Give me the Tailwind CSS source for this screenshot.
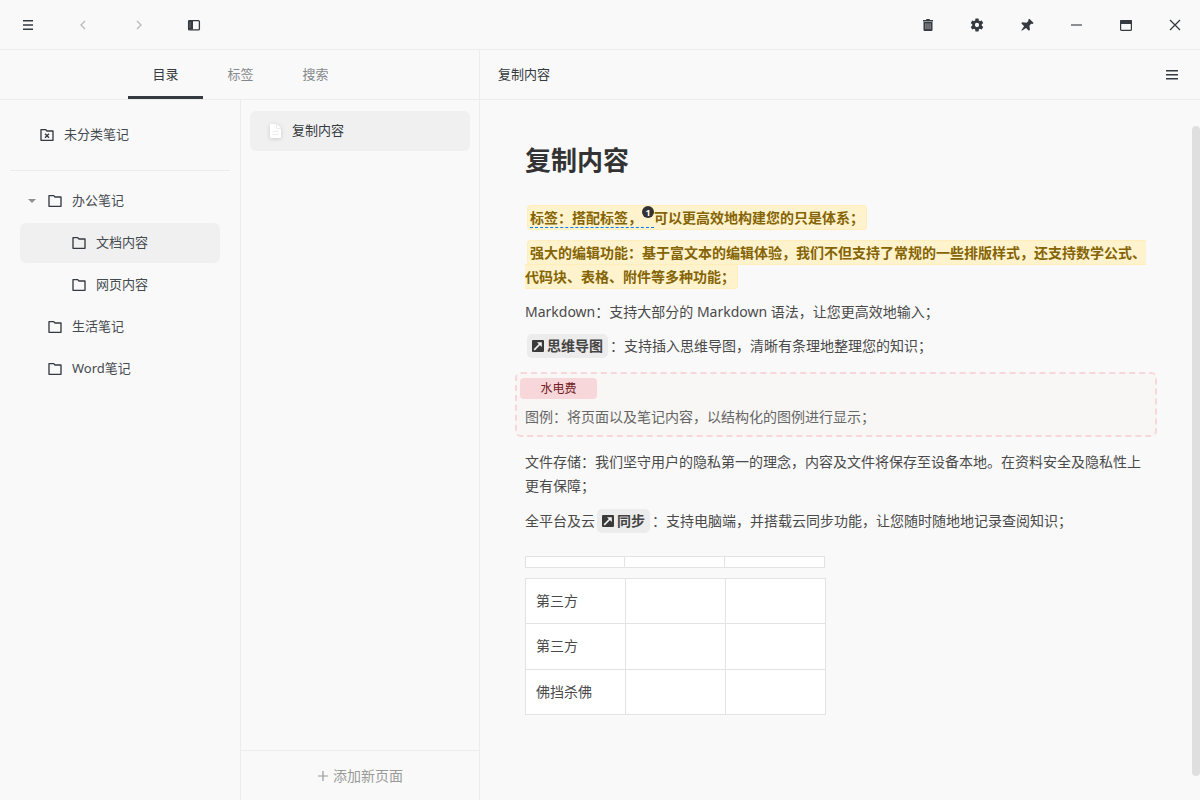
<!DOCTYPE html>
<html lang="zh-CN">
<head>
<meta charset="utf-8">
<title>复制内容</title>
<script src="https://cdn.jsdelivr.net/npm/@tailwindcss/browser@4"></script>
</head>
<body class="flex h-screen flex-col overflow-hidden bg-[#f9f9f9] font-['Noto_Sans','Noto_Sans_CJK_SC',sans-serif] text-[13px] text-[#343a40]">
<svg class="hidden" aria-hidden="true">
  <symbol id="folder" viewBox="0 0 24 24"><path d="M4 5v14h16V7h-8.414l-2-2H4zm8.414 0H21a1 1 0 0 1 1 1v14a1 1 0 0 1-1 1H3a1 1 0 0 1-1-1V4a1 1 0 0 1 1-1h7.414l2 2z"/></symbol>
  <symbol id="jump" viewBox="0 0 12 12"><path fill="#3a3a3a" d="M1 0h10a1 1 0 0 1 1 1v10a1 1 0 0 1-1 1H1a1 1 0 0 1-1-1V1a1 1 0 0 1 1-1z"/><path fill="none" stroke="#f4f4f4" stroke-width="1.7" d="M2.2 9.8 8 4"/><path fill="#f4f4f4" d="M5 2.200h4.800V7z"/></symbol>
</svg>
<header class="flex h-[50px] shrink-0 items-center justify-between border-b border-[#ececec] pr-[17px] pl-5">
  <div class="flex gap-[39px]">
    <button aria-label="菜单"><svg class="size-4" viewBox="0 0 16 16" fill="currentColor"><path d="M3 3h10v1.4H3zM3 7.3h10v1.4H3zM3 11.6h10V13H3z"/></svg></button>
    <button aria-label="后退" class="text-[#b9bbbd]"><svg class="size-4" viewBox="0 0 16 16" fill="none" stroke="currentColor" stroke-width="1.4"><path d="M10 4 6 8l4 4"/></svg></button>
    <button aria-label="前进" class="text-[#b9bbbd]"><svg class="size-4" viewBox="0 0 16 16" fill="none" stroke="currentColor" stroke-width="1.4"><path d="m7 4 4 4-4 4"/></svg></button>
    <button aria-label="侧栏"><svg class="size-4" viewBox="0 0 16 16"><rect x="3.6" y="3.6" width="10.8" height="9.3" rx="1" fill="none" stroke="currentColor" stroke-width="1.3"/><path fill="currentColor" d="M3 3.5h5v9H3z"/><path stroke="#aaa" stroke-width=".8" d="M4.5 5.9h1.2M4.5 7.9h1.2M4.5 9.9h1.2"/></svg></button>
  </div>
  <div class="flex w-[263px] justify-between">
    <button aria-label="删除"><svg class="size-4" viewBox="0 0 16 16" fill="currentColor"><path d="M3 3h3l.6-1h2.8l.6 1h3v1.4H3zM3.5 5h9v8a1 1 0 0 1-1 1h-7a1 1 0 0 1-1-1z"/><path stroke="#c4c6c8" stroke-width=".8" d="M5.9 6.2v6M8 6.2v6M10.1 6.2v6"/></svg></button>
    <button aria-label="设置"><svg class="size-4" viewBox="0 0 24 24" fill="currentColor"><path d="M19.14 12.94c.04-.3.06-.61.06-.94 0-.32-.02-.64-.07-.94l2.03-1.58a.49.49 0 0 0 .12-.61l-1.92-3.32a.488.488 0 0 0-.59-.22l-2.39.96c-.5-.38-1.03-.7-1.62-.94l-.36-2.54a.484.484 0 0 0-.48-.41h-3.84c-.24 0-.43.17-.47.41l-.36 2.54c-.59.24-1.13.57-1.62.94l-2.39-.96c-.22-.08-.47 0-.59.22L2.74 8.87c-.12.21-.08.47.12.61l2.03 1.58c-.05.3-.09.63-.09.94s.02.64.07.94l-2.03 1.58a.49.49 0 0 0-.12.61l1.92 3.32c.12.22.37.29.59.22l2.39-.96c.5.38 1.03.7 1.62.94l.36 2.54c.05.24.24.41.48.41h3.84c.24 0 .44-.17.47-.41l.36-2.54c.59-.24 1.13-.56 1.62-.94l2.39.96c.22.08.47 0 .59-.22l1.92-3.32c.12-.22.07-.47-.12-.61l-2.01-1.58zM12 15.2a3.2 3.2 0 1 1 0-6.4 3.2 3.2 0 0 1 0 6.4z"/></svg></button>
    <button aria-label="置顶"><svg class="size-4" viewBox="0 0 24 24" fill="currentColor"><path d="M22 9 15.500 2.500l-1.700 1.700.4 1.800-3 2.600L5 7.800 3.400 9.400l4.300 4.300L3.500 20l.700.700 6.300-4.200 4.300 4.300 1.600-1.600-.800-6.200 2.600-3 1.900.5z"/></svg></button>
    <button aria-label="最小化"><svg class="size-4" viewBox="0 0 16 16"><path fill="#8b8f92" d="M3 7h11v2H3z"/></svg></button>
    <button aria-label="最大化"><svg class="size-4" viewBox="0 0 16 16"><rect x="2.6" y="3.6" width="10.8" height="9.8" rx="1" fill="none" stroke="currentColor" stroke-width="1.2"/><path fill="currentColor" d="M2 4a1 1 0 0 1 1-1h10a1 1 0 0 1 1 1v3H2z"/></svg></button>
    <button aria-label="关闭"><svg class="size-4" viewBox="0 0 16 16" fill="none" stroke="currentColor" stroke-width="1.3"><path d="m3 3 10 10M13 3 3 13"/></svg></button>
  </div>
</header>
<div class="flex min-h-0 grow">
  <aside class="flex w-[480px] shrink-0 flex-col border-r border-[#ececec]">
    <nav class="flex h-[50px] shrink-0 border-b border-[#ececec] pl-32 text-[#85888b]">
      <button class="w-[75px] border-b-3 border-[#343a40] pt-[3px] text-[#343a40]">目录</button>
      <button class="w-[75px]">标签</button>
      <button class="w-[75px]">搜索</button>
    </nav>
    <div class="flex min-h-0 grow">
      <div class="w-60 shrink-0">
        <div class="mx-[10px] flex h-[71px] items-center gap-[9px] border-b border-[#ececec] pl-[29px]">
          <svg class="size-4" fill="currentColor" viewBox="0 0 24 24"><use href="#folder"/><path stroke="currentColor" stroke-width="2" d="m9 10 6 6M15 10l-6 6"/></svg><span class="text-[#454a4f]">未分类笔记</span>
        </div>
        <ul class="mx-5 mt-[10px] flex flex-col gap-[2px] text-[#454a4f] [&_svg]:text-[#343a40]">
          <li class="flex h-10 items-center gap-[9px] pl-2"><svg class="mr-[2px] h-2 w-2" viewBox="0 0 8 8"><path fill="#8e9194" d="M0 2h8L4 6z"/></svg><svg class="size-4" fill="currentColor"><use href="#folder"/></svg>办公笔记</li>
          <li class="flex h-10 items-center gap-[9px] rounded-md bg-[#f0f0f0] pl-[51px]"><svg class="size-4" fill="currentColor"><use href="#folder"/></svg>文档内容</li>
          <li class="flex h-10 items-center gap-[9px] pl-[51px]"><svg class="size-4" fill="currentColor"><use href="#folder"/></svg>网页内容</li>
          <li class="flex h-10 items-center gap-[9px] pl-[27px]"><svg class="size-4" fill="currentColor"><use href="#folder"/></svg>生活笔记</li>
          <li class="flex h-10 items-center gap-[9px] pl-[27px]"><svg class="size-4" fill="currentColor"><use href="#folder"/></svg>Word笔记</li>
        </ul>
      </div>
      <div class="flex grow flex-col border-l border-[#ececec]">
        <div class="mx-[9px] mt-[11px] flex h-10 items-center gap-[9px] rounded-md bg-[#f0f0f0] pl-[17px]">
          <svg class="size-4 drop-shadow-sm" viewBox="0 0 16 16"><path fill="#fff" d="M4 1h6l4 4v9a1 1 0 0 1-1 1H4a1 1 0 0 1-1-1V2a1 1 0 0 1 1-1z"/><path stroke="#ececec" fill="none" d="M9.5 1v4.500H14M5.500 8.500h6M5.500 11.500h6"/></svg>复制内容
        </div>
        <button class="mt-auto flex h-[50px] items-center justify-center gap-1 border-t border-[#ececec] text-sm text-[#999]"><svg class="size-3" viewBox="0 0 12 12" stroke="currentColor" stroke-width="1.2"><path d="M6 1v10M1 6h10"/></svg>添加新页面</button>
      </div>
    </div>
  </aside>
  <main class="flex min-w-0 grow flex-col">
    <div class="flex h-[50px] shrink-0 items-center justify-between border-b border-[#ececec] pr-5 pl-[18px]">
      <span>复制内容</span>
      <button aria-label="更多"><svg class="size-4" viewBox="0 0 16 16" fill="currentColor"><path d="M2 3h12v1.500H2zM2 7h12v1.500H2zM2 11h12v1.500H2z"/></svg></button>
    </div>
    <div class="flex min-h-0 grow">
      <article class="min-w-0 grow px-[45px] pt-10 text-sm leading-6 text-[#4a4a4a]">
        <h1 class="mb-[26px] text-[26px] leading-10 font-bold text-[#333]">复制内容</h1>
        <p class="mb-[11px]"><mark class="ml-[2px] rounded border border-[#ffeeba] bg-[#fff3cd] px-[2px] py-[2px] font-bold text-[#856404]"><span class="border-b border-dashed border-[#007bff]">标签：搭配标签，<sup class="inline-flex size-3 items-center justify-center rounded-full bg-[#333] align-[3px] text-[9px] leading-none text-white">1</sup></span>可以更高效地构建您的只是体系；</mark></p>
        <p class="mb-[11px]"><mark class="ml-[2px] rounded border border-[#ffeeba] bg-[#fff3cd] px-[2px] py-[2px] font-bold text-[#856404]">强大的编辑功能：基于富文本的编辑体验，我们不但支持了常规的一些排版样式，还支持数学公式、代码块、表格、附件等多种功能；</mark></p>
        <p class="mb-[10px]">Markdown：支持大部分的 Markdown 语法，让您更高效地输入；</p>
        <p><a href="#" class="mx-[2px] inline-flex h-6 items-center gap-[3px] rounded-[5px] bg-[#ececec] px-[5px] align-top font-bold text-[#444]"><svg class="size-3"><use href="#jump"/></svg>思维导图</a>：支持插入思维导图，清晰有条理地整理您的知识；</p>
        <section class="-mx-[10px] mt-[14px] mb-[13px] rounded-md border-2 border-dashed border-[#f8d7da] bg-[#f8f7f5] px-2 pt-1 pb-[6px] text-[#666]">
          <div class="-ml-[5px] flex h-[21px] w-[77px] items-center justify-center rounded bg-[#f8d7da] text-xs text-[#721c24]">水电费</div>
          <p class="mt-[6px]">图例：将页面以及笔记内容，以结构化的图例进行显示；</p>
        </section>
        <p class="mb-[11px]">文件存储：我们坚守用户的隐私第一的理念，内容及文件将保存至设备本地。在资料安全及隐私性上更有保障；</p>
        <p>全平台及云<a href="#" class="mx-[2px] inline-flex h-6 items-center gap-[3px] rounded-[5px] bg-[#ececec] px-[5px] align-top font-bold text-[#444]"><svg class="size-3"><use href="#jump"/></svg>同步</a>：支持电脑端，并搭载云同步功能，让您随时随地地记录查阅知识；</p>
        <div class="mt-[23px] grid h-3 w-[300px] grid-cols-3 divide-x divide-[#e3e3e3] border border-[#e3e3e3] bg-white"><span></span><span></span><span></span></div>
        <table class="mt-[10px] h-[137px] w-[301px] table-fixed border-collapse bg-white [&_td]:border [&_td]:border-[#e3e3e3] [&_td]:px-[10px]">
          <tr><td>第三方</td><td></td><td></td></tr>
          <tr><td>第三方</td><td></td><td></td></tr>
          <tr><td>佛挡杀佛</td><td></td><td></td></tr>
        </table>
      </article>
      <div class="flex w-2 shrink-0 flex-col pt-[26px] pb-6"><div class="grow rounded-full bg-[#dfdfdf]"></div></div>
    </div>
  </main>
</div>
</body>
</html>
